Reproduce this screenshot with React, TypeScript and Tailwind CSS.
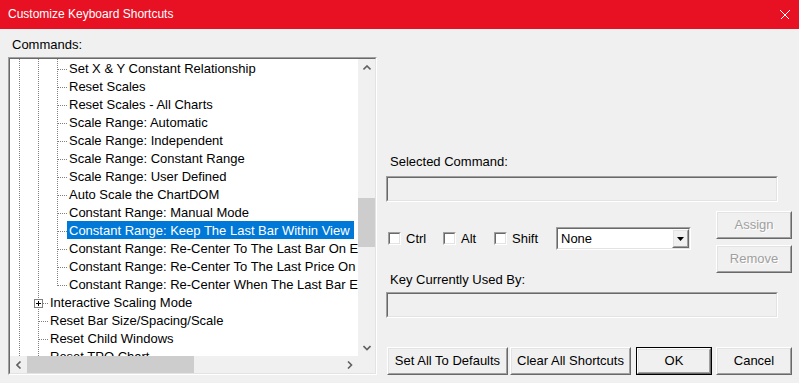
import React from 'react';

type TreeRow = { label: string; level: 1 | 2; last?: boolean; plus?: boolean; selected?: boolean };

const rows: TreeRow[] = [
  { label: 'Set X & Y Constant Relationship', level: 2 },
  { label: 'Reset Scales', level: 2 },
  { label: 'Reset Scales - All Charts', level: 2 },
  { label: 'Scale Range: Automatic', level: 2 },
  { label: 'Scale Range: Independent', level: 2 },
  { label: 'Scale Range: Constant Range', level: 2 },
  { label: 'Scale Range: User Defined', level: 2 },
  { label: 'Auto Scale the ChartDOM', level: 2 },
  { label: 'Constant Range: Manual Mode', level: 2 },
  { label: 'Constant Range: Keep The Last Bar Within View', level: 2, selected: true },
  { label: 'Constant Range: Re-Center To The Last Bar On Exit', level: 2 },
  { label: 'Constant Range: Re-Center To The Last Price On Exit', level: 2 },
  { label: 'Constant Range: Re-Center When The Last Bar Exits View', level: 2, last: true },
  { label: 'Interactive Scaling Mode', level: 1, plus: true },
  { label: 'Reset Bar Size/Spacing/Scale', level: 1 },
  { label: 'Reset Child Windows', level: 1 },
  { label: 'Reset TPO Chart', level: 1 },
];

const dot = '#808080';

const Guides: React.FC<{ row: TreeRow }> = ({ row }) => {
  const w = row.level === 2 ? 57 : 38;
  return (
    <svg width={w} height={18} className="shrink-0" shapeRendering="crispEdges">
      <line x1={9.5} y1={0} x2={9.5} y2={18} stroke={dot} strokeDasharray="1 1" />
      <line x1={28.5} y1={0} x2={28.5} y2={18} stroke={dot} strokeDasharray="1 1" />
      {row.level === 2 && (
        <>
          <line x1={47.5} y1={0} x2={47.5} y2={row.last ? 11 : 18} stroke={dot} strokeDasharray="1 1" />
          <line x1={48} y1={10.5} x2={57} y2={10.5} stroke={dot} strokeDasharray="1 1" />
        </>
      )}
      {row.level === 1 && <line x1={29} y1={10.5} x2={38} y2={10.5} stroke={dot} strokeDasharray="1 1" />}
      {row.plus && (
        <>
          <rect x={24.5} y={6.5} width={8} height={8} fill="#fff" stroke="#808080" />
          <line x1={26} y1={10.5} x2={31} y2={10.5} stroke="#000" />
          <line x1={28.5} y1={8} x2={28.5} y2={13} stroke="#000" />
        </>
      )}
    </svg>
  );
};

const Chevron: React.FC<{ dir: 'up' | 'down' | 'left' | 'right' }> = ({ dir }) => {
  const pts = {
    up: '0.5,4.5 4,1 7.5,4.5',
    down: '0.5,1 4,4.5 7.5,1',
    left: '4.5,0.5 1,4 4.5,7.5',
    right: '1,0.5 4.5,4 1,7.5',
  }[dir];
  const vert = dir === 'up' || dir === 'down';
  return (
    <svg width={vert ? 8 : 6} height={vert ? 6 : 8}>
      <polyline points={pts} fill="none" stroke="#606060" strokeWidth={1.6} />
    </svg>
  );
};

// 2px sunken edge used for text boxes, the list and the combo
const Sunken: React.FC<{ className?: string; inner?: string; children?: React.ReactNode }> = ({ className = '', inner = '', children }) => (
  <div className={`border border-t-[#a0a0a0] border-l-[#a0a0a0] border-b-white border-r-white ${className}`}>
    <div className={`h-full w-full border border-t-[#696969] border-l-[#696969] border-b-[#e3e3e3] border-r-[#e3e3e3] ${inner}`}>
      {children}
    </div>
  </div>
);

const Raised: React.FC<{ className?: string; inner?: string; children?: React.ReactNode }> = ({ className = '', inner = '', children }) => (
  <div className={`border border-t-white border-l-white border-b-[#696969] border-r-[#696969] bg-[#f0f0f0] ${className}`}>
    <div className={`h-full w-full border border-t-[#e3e3e3] border-l-[#e3e3e3] border-b-[#a0a0a0] border-r-[#a0a0a0] ${inner}`}>
      {children}
    </div>
  </div>
);

const Button: React.FC<{ label: string; w: string; disabled?: boolean; primary?: boolean }> = ({ label, w, disabled, primary }) => {
  const face = (
    <Raised
      className={primary ? 'h-full w-full' : `${w} h-[28px]`}
      inner={`flex items-center justify-center text-[13px] ${disabled ? 'text-[#a0a0a0] [text-shadow:1px_1px_0_#fff]' : 'text-black'}`}
    >
      {label}
    </Raised>
  );
  if (!primary) return face;
  return <div className={`${w} h-[28px] border border-black`}>{face}</div>;
};

const Check: React.FC<{ label: string; w: string }> = ({ label, w }) => (
  <div className={`${w} flex items-center gap-[5px]`}>
    <Sunken className="w-[13px] h-[13px]" inner="bg-white" />
    <span className="text-[13px] leading-[15px]">{label}</span>
  </div>
);

export default function App() {
  return (
    <div className="w-[799px] h-[383px] bg-[#f0f0f0] overflow-hidden flex flex-col font-['Liberation_Sans',Arial,sans-serif] text-black select-none">
      {/* Title bar */}
      <div className="h-[29px] shrink-0 bg-[#e81123] flex items-center justify-between pl-[8px] pr-[9px]">
        <span className="text-white text-[12px] leading-[15px]">Customize Keyboard Shortcuts</span>
        <svg width={10} height={10} shapeRendering="crispEdges">
          <path d="M0.5 0.5 L9.5 9.5 M9.5 0.5 L0.5 9.5" stroke="#fff" strokeWidth={1.2} />
        </svg>
      </div>

      <div className="flex flex-1">
        {/* Commands list */}
        <div className="w-[386px] pl-[8px] pt-[8px]">
          <div className="ml-[4px] h-[15px] text-[13px] leading-[15px]">Commands:</div>
          <Sunken className="mt-[5px] w-[369px] h-[318px]" inner="flex flex-col">
            <div className="flex h-[297px]">
              <div className="w-[348px] bg-white overflow-hidden">
                {rows.map((r) => (
                  <div key={r.label} className="h-[18px] flex items-center whitespace-nowrap">
                    <Guides row={r} />
                    <span
                      className={`px-[2px] h-[18px] pt-[1px] text-[13px] leading-[17px] ${r.selected ? 'bg-[#0078d7] text-white pr-[4px]' : 'text-black'}`}
                    >
                      {r.label}
                    </span>
                  </div>
                ))}
              </div>
              <div className="w-[17px] bg-[#f0f0f0] flex flex-col">
                <div className="h-[17px] flex items-center justify-center">
                  <Chevron dir="up" />
                </div>
                <div className="flex-1 flex flex-col">
                  <div className="h-[122px]" />
                  <div className="h-[49px] bg-[#cdcdcd]" />
                </div>
                <div className="h-[17px] flex items-center justify-center">
                  <Chevron dir="down" />
                </div>
              </div>
            </div>
            <div className="flex h-[17px] bg-[#f0f0f0]">
              <div className="w-[17px] flex items-center justify-center">
                <Chevron dir="left" />
              </div>
              <div className="flex-1 flex items-stretch">
                <div className="w-[167px] bg-[#cdcdcd]" />
              </div>
              <div className="w-[17px] flex items-center justify-center">
                <Chevron dir="right" />
              </div>
              <div className="w-[17px]" />
            </div>
          </Sunken>
        </div>

        {/* Right side */}
        <div className="w-[406px] pt-[125px] flex flex-col">
          <div className="ml-[4px] h-[15px] text-[13px] leading-[15px]">Selected Command:</div>
          <Sunken className="mt-[7px] w-[392px] h-[26px]" inner="bg-[#f0f0f0]" />

          <div className="mt-[9px] flex justify-between">
            <div className="flex flex-col">
              <div className="pt-[16px] pl-[2px] flex items-center h-[39px]">
                <Check label="Ctrl" w="w-[55px]" />
                <Check label="Alt" w="w-[51px]" />
                <Check label="Shift" w="w-[62px]" />
                <Sunken className="w-[135px] h-[23px]" inner="bg-white flex items-center justify-between">
                  <span className="pl-[3px] text-[13px] leading-[15px]">None</span>
                  <Raised className="w-[17px] h-[19px]" inner="flex items-center justify-center">
                    <svg width={7} height={4}>
                      <polygon points="0,0 7,0 3.5,4" fill="#000" />
                    </svg>
                  </Raised>
                </Sunken>
              </div>
              <div className="mt-[22px] ml-[4px] h-[15px] text-[13px] leading-[15px]">Key Currently Used By:</div>
            </div>
            <div className="flex flex-col gap-[6px]">
              <Button label="Assign" w="w-[76px]" disabled />
              <Button label="Remove" w="w-[76px]" disabled />
            </div>
          </div>

          <Sunken className="mt-[5px] w-[392px] h-[26px]" inner="bg-[#f0f0f0]" />

          <div className="mt-[29px] ml-[1px] flex items-center">
            <Button label="Set All To Defaults" w="w-[121px]" />
            <div className="ml-[2px]">
              <Button label="Clear All Shortcuts" w="w-[121px]" />
            </div>
            <div className="ml-[5px]">
              <Button label="OK" w="w-[76px]" primary />
            </div>
            <div className="ml-[4px]">
              <Button label="Cancel" w="w-[76px]" />
            </div>
          </div>
        </div>
      </div>
    </div>
  );
}
